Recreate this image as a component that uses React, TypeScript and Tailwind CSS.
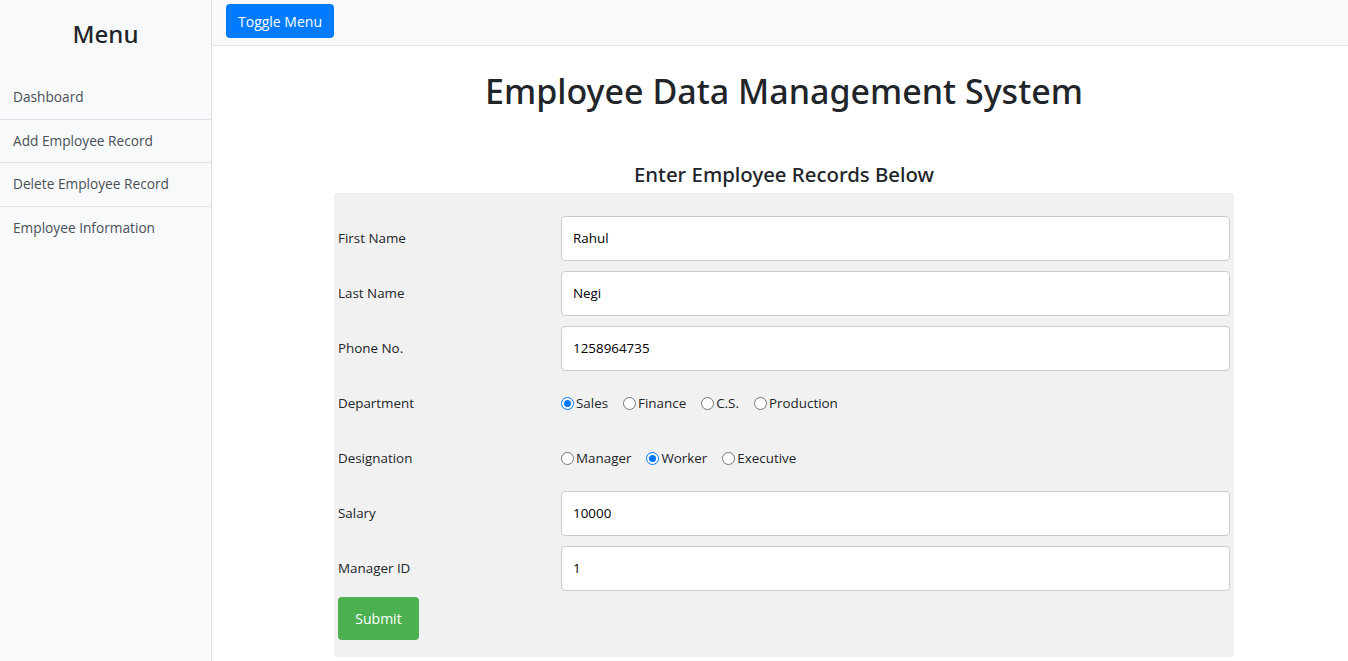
import React from "react";

const font = { fontFamily: '"Open Sans", "Noto Sans", sans-serif' };
const headFont = { fontFamily: '"Noto Sans", "Open Sans", sans-serif' };

function Radio({ checked, label }: { checked?: boolean; label: string }) {
  return (
    <span className="inline-flex items-center mr-[15px]">
      {checked ? (
        <span className="w-[13px] h-[13px] rounded-full border border-[#0075ff] bg-white flex items-center justify-center">
          <span className="w-[7px] h-[7px] rounded-full bg-[#0075ff]" />
        </span>
      ) : (
        <span className="w-[13px] h-[13px] rounded-full border border-[#767676] bg-white" />
      )}
      <span className="ml-[2px] text-[13.4px] text-[#212529]">{label}</span>
    </span>
  );
}

function Row({ label, children }: { label: string; children: React.ReactNode }) {
  return (
    <div className="flex items-center h-[45px]">
      <div className="w-1/4 text-[13.4px] text-[#212529]">{label}</div>
      <div className="w-3/4 flex items-center">{children}</div>
    </div>
  );
}

function Input({ value }: { value: string }) {
  return (
    <div className="w-full h-[45px] bg-white border border-[#ccc] rounded-[4px] flex items-center px-[11px] text-[13.4px] text-[#000]">
      {value}
    </div>
  );
}

export default function App() {
  return (
    <div className="flex w-[1348px] h-[661px] overflow-hidden bg-white" style={font}>
      <aside className="w-[212px] shrink-0 bg-[#f8f9fa] border-r border-[#dee2e6] h-full">
        <div className="h-[76px] flex items-start justify-center pt-[16px]">
          <h3 className="text-[24px] text-[#212529] leading-[36px] font-medium" style={headFont}>Menu</h3>
        </div>
        {["Dashboard", "Add Employee Record", "Delete Employee Record", "Employee Information"].map((t, i) => (
          <div
            key={t}
            className={`h-[43.5px] flex items-center px-[13px] pt-[1px] text-[13.7px] text-[#495057] ${i < 3 ? "border-b border-[#dee2e6]" : ""}`}
          >
            {t}
          </div>
        ))}
      </aside>
      <div className="flex-1 flex flex-col">
        <div className="h-[46px] bg-[#f8f9fa] border-b border-[#dee2e6] flex items-start pl-[14px] pt-[4px]">
          <button className="h-[34px] px-[12px] bg-[#007bff] text-white text-[14px] rounded-[4px]">Toggle Menu</button>
        </div>
        <div className="flex-1 flex flex-col items-center pl-[8px]">
          <h1 className="mt-[21px] text-[34px] leading-[48px] text-[#212529] font-medium" style={headFont}>Employee Data Management System</h1>
          <h4 className="mt-[44px] text-[20.4px] leading-[30px] text-[#212529] font-medium" style={headFont}>Enter Employee Records Below</h4>
          <div className="mt-[4px] w-[900px] bg-[#f1f1f1] rounded-[4px] px-[4px] pt-[23px] pb-[17px] flex flex-col gap-[10px]">
            <Row label="First Name"><Input value="Rahul" /></Row>
            <Row label="Last Name"><Input value="Negi" /></Row>
            <Row label="Phone No."><Input value="1258964735" /></Row>
            <Row label="Department">
              <Radio checked label="Sales" />
              <Radio label="Finance" />
              <Radio label="C.S." />
              <Radio label="Production" />
            </Row>
            <Row label="Designation">
              <Radio label="Manager" />
              <Radio checked label="Worker" />
              <Radio label="Executive" />
            </Row>
            <Row label="Salary"><Input value="10000" /></Row>
            <Row label="Manager ID"><Input value="1" /></Row>
            <div className="-mt-[4px]">
              <button className="w-[81px] h-[43px] bg-[#4caf50] text-white text-[14px] rounded-[4px]">Submit</button>
            </div>
          </div>
        </div>
      </div>
    </div>
  );
}
